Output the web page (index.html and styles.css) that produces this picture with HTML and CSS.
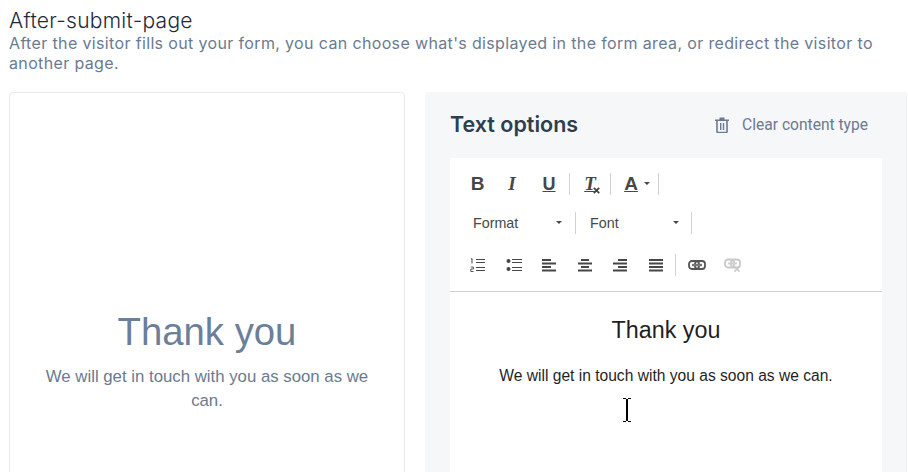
FILE: index.html
```html
<!DOCTYPE html>
<html lang="en">
<head>
<meta charset="utf-8">
<title>After-submit-page</title>
<link rel="stylesheet" href="styles.css">
</head>
<body>
<main class="page">
  <h1 class="title">After-submit-page</h1>
  <p class="subtitle">After the visitor fills out your form, you can choose what's displayed in the form area, or redirect the visitor to another page.</p>
  <div class="columns">
    <section class="preview">
      <h2 class="preview-title">Thank you</h2>
      <p class="preview-text">We will get in touch with you as soon as we can.</p>
    </section>
    <section class="options">
      <header class="options-head">
        <h2 class="options-title">Text options</h2>
        <button class="clear" type="button">
          <svg class="trash" viewBox="0 0 14 16" width="14" height="16"><path d="M0 2.500h14v1.400H0zM4.500 .5h5v2h-5z" fill="#6b7a90"/><path d="M2 4v10.500q0 1 1 1h8q1 0 1-1V4" fill="none" stroke="#6b7a90" stroke-width="1.6"/><path d="M5 6h1.400v7H5zM7.800 6h1.400v7H7.800z" fill="#6b7a90"/></svg>
          <span>Clear content type</span>
        </button>
      </header>
      <div class="editor">
        <div class="toolbar">
          <div class="tool-row row-a">
            <span class="tool t-bold">B</span>
            <span class="tool t-italic">I</span>
            <span class="tool t-under">U</span>
            <i class="sep"></i>
            <span class="tool t-clear">T<svg class="x" viewBox="0 0 6 6" width="7" height="7"><path d="M.7.7l4.600 4.600M5.300.7L.7 5.300" stroke="#474747" stroke-width="1.6"/></svg></span>
            <i class="sep"></i>
            <span class="tool t-color">A</span><b class="caret small"></b>
            <i class="sep"></i>
          </div>
          <div class="tool-row row-b">
            <span class="combo c-format">Format<b class="caret"></b></span>
            <i class="sep"></i>
            <span class="combo c-font">Font<b class="caret"></b></span>
            <i class="sep"></i>
          </div>
          <div class="tool-row row-c">
            <svg class="ico" viewBox="0 0 16 14" width="16" height="14"><path d="M6 1.500h9M6 4.500h9M6 9.500h9M6 12.500h9" stroke="#474747" stroke-width="1.2"/><path d="M2 .5v5M1 1.300l1-.8" stroke="#474747" stroke-width="1" fill="none"/><path d="M.8 9h2.600v2H.8v2.500h2.800" stroke="#474747" stroke-width=".9" fill="none"/></svg>
            <svg class="ico" viewBox="0 0 16 14" width="16" height="14"><circle cx="2.500" cy="3" r="2" fill="#474747"/><circle cx="2.500" cy="11" r="2" fill="#474747"/><path d="M6 1.500h10M6 4.500h10M6 9.500h10M6 12.500h10" stroke="#474747" stroke-width="1.2"/></svg>
            <svg class="ico" viewBox="0 0 16 14" width="16" height="14"><path d="M1 2h9M1 5.500h14M1 9h9M1 12.500h14" stroke="#474747" stroke-width="2"/></svg>
            <svg class="ico" viewBox="0 0 16 14" width="16" height="14"><path d="M4 2h8M1 5.500h14M4 9h8M1 12.500h14" stroke="#474747" stroke-width="2"/></svg>
            <svg class="ico" viewBox="0 0 16 14" width="16" height="14"><path d="M6 2h9M1 5.500h14M6 9h9M1 12.500h14" stroke="#474747" stroke-width="2"/></svg>
            <svg class="ico" viewBox="0 0 16 14" width="16" height="14"><path d="M1 2h14M1 5.500h14M1 9h14M1 12.500h14" stroke="#474747" stroke-width="2"/></svg>
            <i class="sep sep-link"></i>
            <svg class="ico" viewBox="0 0 18 12" width="18" height="12"><rect x="1" y="2" width="10" height="8" rx="3" fill="none" stroke="#555" stroke-width="1.800"/><rect x="7" y="2" width="10" height="8" rx="3" fill="none" stroke="#555" stroke-width="1.800"/><path d="M4 6h10" stroke="#777" stroke-width="2.400"/></svg>
            <svg class="ico dim" viewBox="0 0 18 14" width="18" height="14"><rect x="1" y="1.500" width="9" height="8" rx="3" fill="none" stroke="#888" stroke-width="1.800"/><rect x="7" y="1.500" width="9" height="8" rx="3" fill="none" stroke="#888" stroke-width="1.800"/><path d="M4 5.500h9" stroke="#999" stroke-width="2"/><path d="M10.500 8.500l5 5M15.500 8.500l-5 5" stroke="#888" stroke-width="1.700"/></svg>
          </div>
        </div>
        <div class="content">
          <h3 class="content-title">Thank you</h3>
          <p class="content-text">We will get in touch with you as soon as we can.</p>
          <svg class="cursor" viewBox="0 0 10 24" width="10" height="24"><path d="M1 .5h3M6 .5h3M1 23.500h3M6 23.500h3" fill="none" stroke="#000" stroke-width="1.100"/><path d="M5 1v22" stroke="#000" stroke-width="2"/></svg>
        </div>
      </div>
    </section>
  </div>
</main>
</body>
</html>
```
FILE: styles.css
```css
* { box-sizing: border-box; }
html, body { margin: 0; height: 100%; overflow: hidden; background: #fff; }
.page { padding: 9px 0 0 9px; width: 908px; height: 472px; overflow: hidden; font-family: Inter, sans-serif; }
.title { margin: 0; font-size: 21px; letter-spacing: .28px; line-height: 24px; font-weight: 300; color: #1c2a3a; }
.subtitle { margin: 0; width: 880px; font-size: 16px; letter-spacing: .355px; line-height: 20px; color: #6b7a90; }
.columns { display: flex; gap: 20px; margin-top: 19px; }
.preview { flex: none; width: 396px; height: 500px; border: 1px solid #e5e9f0; border-radius: 4px; padding-top: 216px; text-align: center; font-family: "Liberation Sans", sans-serif; }
.preview-title { margin: 0; font-size: 38.3px; line-height: 46px; font-weight: 400; color: #6b7f99; }
.preview-text { margin: 10px auto 0; width: 340px; font-size: 16.8px; line-height: 24px; color: #6b7a90; }
.options { flex: none; width: 481px; height: 500px; background: #f6f7f9; border-radius: 4px; padding: 0 24px 0 25px; box-shadow: 1px 0 1px #f0f0f0; }
.options-head { display: flex; justify-content: space-between; align-items: center; height: 66px; padding-bottom: 2px; }
.options-title { margin: 0; font-size: 21.5px; font-weight: 600; color: #2d3e50; }
.clear { display: flex; align-items: center; gap: 13px; border: 0; background: none; padding: 1px 14px 0 0; font: 15.6px Roboto, sans-serif; color: #6b7a90; }
.trash { display: block; }
.editor { width: 432px; height: 400px; background: #fff; font-family: "Liberation Sans", sans-serif; }
.toolbar { height: 134px; border-bottom: 1px solid #d1d1d1; padding-top: 5px; }
.tool-row { display: flex; align-items: center; height: 41px; }
.row-a { padding-left: 10px; }
.tool { flex: none; position: relative; text-align: center; font-size: 19px; font-weight: 700; color: #474747; line-height: 22px; }
.t-bold { width: 35px; }
.t-italic { width: 34px; font-family: "Liberation Serif", serif; font-style: italic; }
.t-under { width: 40px; text-decoration: underline; font-size: 18px; }
.t-clear { width: 40px; font-family: "Liberation Serif", serif; font-style: italic; text-decoration: underline; }
.t-clear .x { position: absolute; left: 23px; bottom: 1px; }
.t-color { width: 40px; text-decoration: underline; }
.sep { display: block; width: 1px; height: 22px; background: #d1d1d1; flex: none; }
.caret { display: block; flex: none; width: 0; height: 0; border: 3px solid transparent; border-top-color: #474747; border-bottom: 0; }
.caret.small { margin: 0 8px 0 -7px; }
.combo { flex: none; display: flex; align-items: center; justify-content: space-between; font-size: 14.3px; color: #484848; }
.row-b { padding: 0 0 2px 23px; height: 39px; }
.c-format { width: 102px; padding-right: 13px; }
.c-font { width: 115px; padding: 0 12px 0 14px; }
.row-c { padding-left: 20px; gap: 19.5px; height: 43px; }
.sep-link { margin: 0 -7.5px 0 -8.5px; }
.ico { display: block; flex: none; }
.ico.dim { opacity: .45; margin-left: -1px; }
.content { position: relative; text-align: center; color: #1f1f1f; }
.content-title { margin: 0; padding-top: 24px; font-size: 23.3px; line-height: 28px; font-weight: 400; }
.content-text { margin: 22px 0 0; font-size: 15.6px; line-height: 20px; }
.cursor { position: absolute; left: 172px; top: 106px; }
```
